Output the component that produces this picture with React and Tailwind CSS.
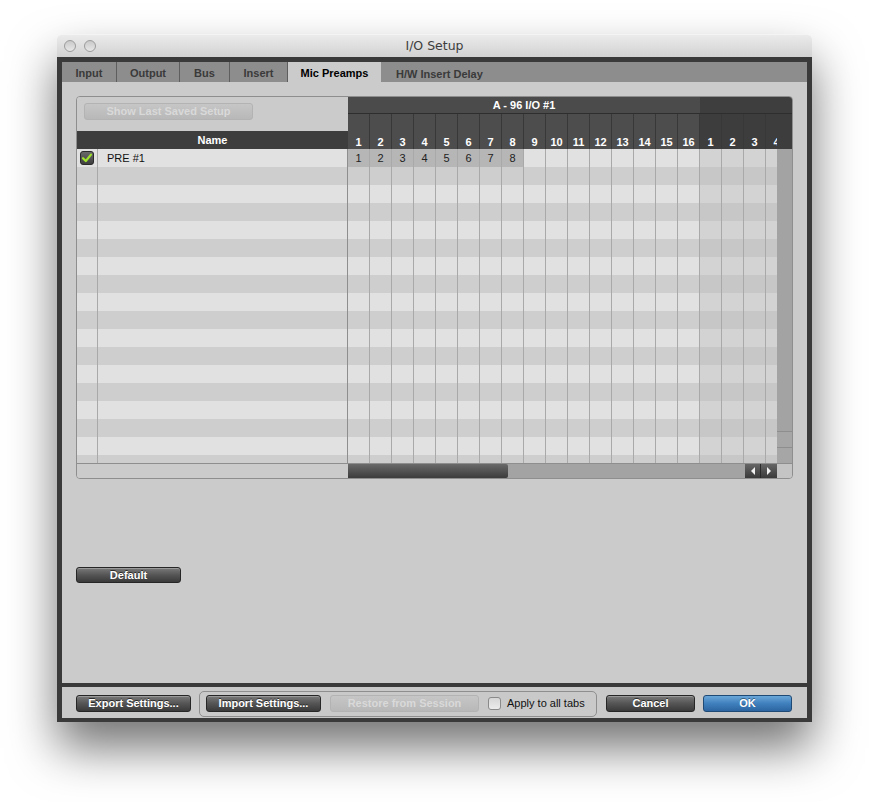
import React from "react";

const F = "font-['Liberation_Sans',Arial,sans-serif]";

function DarkButton({ children, w, h = "h-[17px]", className = "" }) {
  return (
    <div
      className={`${w} ${h} ${className} flex items-center justify-center rounded-[3px] border border-[#262626] bg-gradient-to-b from-[#7a7a7a] via-[#555555] to-[#3a3a3a] text-[11px] font-bold text-white [text-shadow:0_-1px_0_rgba(0,0,0,0.6)] shadow-[inset_0_1px_0_rgba(255,255,255,0.25)]`}
    >
      {children}
    </div>
  );
}

function DisabledButton({ children, w, h = "h-[17px]" }) {
  return (
    <div
      className={`${w} ${h} flex items-center justify-center rounded-[3px] border border-[#b3b3b3] bg-gradient-to-b from-[#c6c6c6] to-[#b8b8b8] text-[11px] font-bold text-[#d9d9d9]`}
    >
      {children}
    </div>
  );
}

function GreenCheck() {
  return (
    <svg width="14" height="14" viewBox="0 0 14 14">
      <defs>
        <linearGradient id="cb" x1="0" y1="0" x2="0" y2="1">
          <stop offset="0" stopColor="#6a6a6a" />
          <stop offset="1" stopColor="#3c3c3c" />
        </linearGradient>
      </defs>
      <rect x="0.5" y="0.5" width="13" height="13" rx="2.5" fill="url(#cb)" stroke="#2a2a2a" />
      <path d="M3 7.2 L5.8 10 L11 3.6" fill="none" stroke="#9fe22c" strokeWidth="2.2" strokeLinecap="round" strokeLinejoin="round" />
    </svg>
  );
}

const tabs = [
  { label: "Input", w: "w-[55px]" },
  { label: "Output", w: "w-[63px]" },
  { label: "Bus", w: "w-[50px]" },
  { label: "Insert", w: "w-[58px]" },
];

const cols = Array.from({ length: 20 }, (_, i) => (i < 16 ? i + 1 : i - 15));
const rows = Array.from({ length: 18 }, (_, i) => i);

export default function App() {
  return (
    <div className={`${F} min-h-[802px] w-[869px] bg-white pl-[57px] pt-[34px]`}>
      <div className="flex h-[688px] w-[755px] flex-col rounded-t-[5px] shadow-[0_26px_48px_rgba(0,0,0,0.55)]">
        {/* Title bar */}
        <div className="relative flex h-[23px] items-center rounded-t-[5px] border-t border-[#f4f4f4] bg-gradient-to-b from-[#ebebeb] to-[#d2d2d2]">
          <div className="ml-[7px] flex gap-[8px]">
            <div className="h-[12px] w-[12px] rounded-full border border-[#9c9c9c] bg-gradient-to-b from-[#c9c9c9] to-[#e8e8e8]" />
            <div className="h-[12px] w-[12px] rounded-full border border-[#9c9c9c] bg-gradient-to-b from-[#c9c9c9] to-[#e8e8e8]" />
          </div>
          <div className="absolute inset-x-0 top-[2px] text-center font-['DejaVu_Sans',sans-serif] text-[12.5px] text-[#3d3d3d]">
            I/O Setup
          </div>
        </div>

        {/* Dark frame */}
        <div className="flex flex-1 flex-col bg-[#3a3a3a] px-[5px] pb-[4px] pt-[5px]">
          {/* Tabs */}
          <div className="flex h-[20px] bg-[#8d8d8d] text-[11px] font-bold">
            {tabs.map((t) => (
              <div
                key={t.label}
                className={`${t.w} flex items-center justify-center border-r border-[#5e5e5e] pt-[2px] text-[#3a3a3a]`}
              >
                {t.label}
              </div>
            ))}
            <div className="flex w-[93px] items-center justify-center bg-[#cbcbcb] pt-[2px] text-black">Mic Preamps</div>
            <div className="flex flex-1 items-start pl-[15px] pt-[4px] text-[#3a3a3a]">H/W Insert Delay</div>
          </div>

          {/* Content */}
          <div className="flex h-[601px] flex-col bg-[#cbcbcb] px-[14px] pt-[14px]">
            {/* Panel */}
            <div className="flex h-[383px] w-[717px] flex-col overflow-hidden rounded-[4px] border border-[#8e8e8e]">
              {/* header */}
              <div className="flex h-[52px]">
                <div className="flex w-[271px] flex-col">
                  <div className="h-[34px] bg-[#cbcbcb] pl-[7px] pt-[6px]">
                    <DisabledButton w="w-[169px]">Show Last Saved Setup</DisabledButton>
                  </div>
                  <div className="flex h-[18px] items-center justify-center bg-[#3d3d3d] text-[11px] font-bold text-white">
                    Name
                  </div>
                </div>
                <div className="flex flex-1 flex-col">
                  <div className="flex h-[17px] border-b border-[#2e2e2e]">
                    <div className="flex w-[352px] items-center justify-center bg-[#4b4b4b] text-[11px] font-bold text-white">
                      A - 96 I/O #1
                    </div>
                    <div className="flex-1 bg-[#3e3e3e]" />
                  </div>
                  <div className="flex h-[35px]">
                    <div className="flex w-[429px] overflow-hidden">
                      {cols.map((c, i) => (
                        <div
                          key={i}
                          className={`flex h-full w-[22px] shrink-0 items-end justify-center border-r border-[#383838] text-[11px] font-bold leading-[14px] text-white ${
                            i < 16 ? "bg-[#4d4d4d]" : "bg-[#3d3d3d]"
                          }`}
                        >
                          {c}
                        </div>
                      ))}
                    </div>
                    <div className="flex-1 bg-[#3d3d3d]" />
                  </div>
                </div>
              </div>

              {/* rows */}
              <div className="flex h-[314px] overflow-hidden">
                <div className="flex w-[271px] flex-col">
                  {rows.map((r) => (
                    <div
                      key={r}
                      className={`flex h-[18px] shrink-0 ${r % 2 === 0 ? "bg-[#e1e1e1]" : "bg-[#cecece]"}`}
                    >
                      <div className="flex w-[21px] items-center justify-center border-r border-[#a9a9a9]">
                        {r === 0 && <GreenCheck />}
                      </div>
                      <div className="flex flex-1 items-center border-r border-[#8e8e8e] pl-[9px] text-[11px] text-[#111]">
                        {r === 0 ? "PRE #1" : ""}
                      </div>
                    </div>
                  ))}
                </div>
                <div className="flex w-[429px] flex-col overflow-hidden">
                  {rows.map((r) => (
                    <div key={r} className="flex h-[18px] shrink-0">
                      {cols.map((c, i) => {
                        const dev2 = i >= 16;
                        const filled = r === 0 && i < 8;
                        const bg = filled
                          ? "bg-[#b6b6b6]"
                          : dev2
                          ? r % 2 === 0
                            ? "bg-[#d3d3d3]"
                            : "bg-[#c7c7c7]"
                          : r % 2 === 0
                          ? "bg-[#e1e1e1]"
                          : "bg-[#cecece]";
                        return (
                          <div
                            key={i}
                            className={`flex w-[22px] shrink-0 items-center justify-center border-r border-[#a9a9a9] text-[11px] text-[#222] ${bg}`}
                          >
                            {filled ? c : ""}
                          </div>
                        );
                      })}
                    </div>
                  ))}
                </div>
                <div className="flex flex-1 flex-col bg-[#a3a3a3]">
                  <div className="flex-1" />
                  <div className="h-[16px] border-t border-[#8e8e8e] bg-[#a6a6a6]" />
                  <div className="h-[16px] border-t border-[#8e8e8e] bg-[#a6a6a6]" />
                </div>
              </div>

              {/* horizontal scrollbar row */}
              <div className="flex h-[15px] border-t border-[#8e8e8e]">
                <div className="w-[271px] bg-[#cbcbcb]" />
                <div className="flex w-[429px] bg-[#a3a3a3]">
                  <div className="w-[160px] rounded-r-[2px] bg-gradient-to-b from-[#6a6a6a] to-[#3c3c3c]" />
                  <div className="flex-1" />
                  <div className="flex w-[16px] items-center justify-center border-r border-[#2a2a2a] bg-gradient-to-b from-[#666] to-[#3a3a3a]">
                    <svg width="6" height="8" viewBox="0 0 6 8">
                      <path d="M5 0 L1 4 L5 8 Z" fill="#f0f0f0" />
                    </svg>
                  </div>
                  <div className="flex w-[16px] items-center justify-center bg-gradient-to-b from-[#666] to-[#3a3a3a]">
                    <svg width="6" height="8" viewBox="0 0 6 8">
                      <path d="M1 0 L5 4 L1 8 Z" fill="#f0f0f0" />
                    </svg>
                  </div>
                </div>
                <div className="flex-1 bg-[#c4c4c4]" />
              </div>
            </div>

            <div className="mt-[88px]">
              <DarkButton w="w-[105px]" h="h-[16px]">Default</DarkButton>
            </div>
          </div>

          {/* separator */}
          <div className="h-[4px]" />

          {/* Bottom bar */}
          <div className="flex h-[31px] items-center bg-[#c9c9c9] pl-[14px] pt-[2px]">
            <DarkButton w="w-[115px]">Export Settings...</DarkButton>
            <div className="ml-[8px] flex h-[26px] w-[398px] items-center rounded-[5px] border border-[#8e8e8e] pl-[6px]">
              <DarkButton w="w-[115px]">Import Settings...</DarkButton>
              <div className="ml-[9px]">
                <DisabledButton w="w-[149px]">Restore from Session</DisabledButton>
              </div>
              <div className="ml-[9px] h-[13px] w-[13px] rounded-[3px] border border-[#8a8a8a] bg-gradient-to-b from-[#d6d6d6] to-[#ececec]" />
              <div className="ml-[6px] text-[11px] text-[#111]">Apply to all tabs</div>
            </div>
            <DarkButton w="w-[89px]" className="ml-[9px]">Cancel</DarkButton>
            <div className="ml-[8px] flex h-[17px] w-[89px] items-center justify-center rounded-[3px] border border-[#1f4a75] bg-gradient-to-b from-[#6aa6d8] via-[#3f80bd] to-[#2c65a0] text-[11px] font-bold text-white [text-shadow:0_-1px_0_rgba(0,0,0,0.4)]">
              OK
            </div>
          </div>
        </div>
      </div>
    </div>
  );
}
